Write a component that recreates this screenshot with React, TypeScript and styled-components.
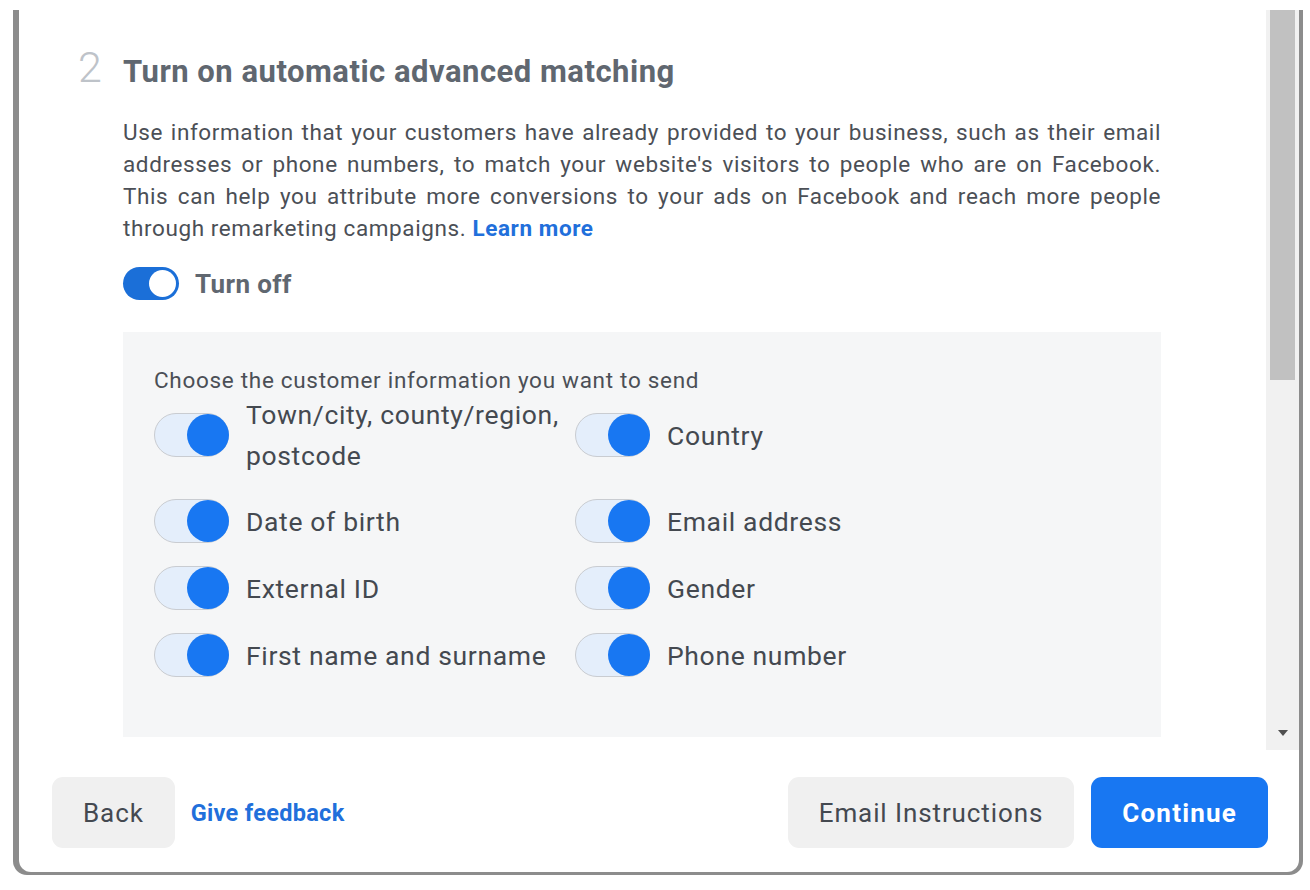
import React from "react";
import styled, { createGlobalStyle } from "styled-components";

const Global = createGlobalStyle`
  html, body { margin: 0; padding: 0; background: #ffffff; }
  body { font-family: Roboto, "Liberation Sans", Arial, sans-serif; -webkit-font-smoothing: antialiased; }
  * { box-sizing: border-box; }
`;

const Frame = styled.div`
  margin: 10px 0 0 13px;
  width: 1290px;
  height: 865px;
  background: #8c8c8c;
  padding: 0 4px 3px 6px;
  border-radius: 0 0 14px 14px;
`;

const Dialog = styled.div`
  height: 100%;
  background: #ffffff;
  border-radius: 0 0 12px 12px;
  display: flex;
  flex-direction: column;
  overflow: hidden;
`;

const Body = styled.div`
  height: 740px;
  display: flex;
  flex-direction: row;
`;

const Content = styled.div`
  flex: 1;
  padding: 36px 0 0 59px;
  overflow: hidden;
`;

const Section = styled.section`
  display: grid;
  grid-template-columns: 45px 1038px;
  align-items: baseline;
`;

const StepNumber = styled.div`
  font-size: 43px;
  font-weight: 300;
  line-height: 42px;
  color: #bec3c9;
`;

const Title = styled.h2`
  margin: 0;
  font-size: 31px;
  font-weight: 700;
  line-height: 42px;
  letter-spacing: 0.5px;
  color: #606770;
`;

const Main = styled.div`
  grid-column: 2;
`;

const Paragraph = styled.p`
  margin: 23px 0 0;
  font-size: 22.5px;
  line-height: 32px;
  color: #4b4f56;
  text-align: justify;
  letter-spacing: 0.6px;
`;

const Link = styled.a`
  color: #216fdb;
  font-weight: 700;
  text-decoration: none;
`;

const ToggleRow = styled.div`
  margin-top: 23px;
  display: flex;
  align-items: center;
  gap: 16px;
`;

const MainTrack = styled.div`
  position: relative;
  width: 56px;
  height: 33px;
  border-radius: 17px;
  background: #1b6fd8;
`;

const MainKnob = styled.div`
  position: absolute;
  right: 3px;
  top: 3px;
  width: 27px;
  height: 27px;
  border-radius: 50%;
  background: #ffffff;
`;

const ToggleLabel = styled.span`
  font-size: 26px;
  font-weight: 700;
  letter-spacing: 0.4px;
  color: #606770;
`;

const OptionsBox = styled.div`
  margin-top: 32px;
  height: 405px;
  background: #f5f6f7;
  padding: 34px 31px 0;
`;

const BoxCaption = styled.div`
  font-size: 22.5px;
  line-height: 28px;
  letter-spacing: 0.7px;
  color: #4b4f56;
`;

const OptionsGrid = styled.div`
  display: grid;
  grid-template-columns: 421px 421px;
  row-gap: 23px;
`;

const Option = styled.div`
  display: flex;
  align-items: center;
  gap: 17px;
`;

const SmallTrack = styled.div`
  position: relative;
  flex: 0 0 auto;
  width: 75px;
  height: 44px;
  border-radius: 22px;
  background: #e4eefb;
  border: 1.5px solid #c9ccd1;
`;

const SmallKnob = styled.div`
  position: absolute;
  right: -1px;
  top: 50%;
  transform: translateY(-50%);
  width: 42px;
  height: 42px;
  border-radius: 50%;
  background: #1877f2;
`;

const OptionLabel = styled.span`
  font-size: 26.5px;
  line-height: 41px;
  letter-spacing: 0.65px;
  color: #444950;
`;

const ScrollTrack = styled.div`
  width: 33px;
  background: #f1f1f1;
  padding: 0 4px;
  display: flex;
  flex-direction: column;
  justify-content: space-between;
  align-items: center;
`;

const ScrollThumb = styled.div`
  width: 25px;
  height: 370px;
  background: #c1c1c1;
`;

const ScrollArrow = styled.div`
  width: 0;
  height: 0;
  border-left: 5px solid transparent;
  border-right: 5px solid transparent;
  border-top: 6px solid #505050;
  margin-bottom: 14px;
`;

const Footer = styled.div`
  display: flex;
  align-items: center;
  padding: 27px 31px 0 33px;
`;

const Button = styled.button<{ $primary?: boolean }>`
  height: 71px;
  padding: 0 31px;
  border: none;
  border-radius: 11px;
  font-family: Roboto, "Liberation Sans", Arial, sans-serif;
  font-size: 26px;
  font-weight: ${(p) => (p.$primary ? 700 : 400)};
  letter-spacing: ${(p) => (p.$primary ? "1.2px" : "0.9px")};
  color: ${(p) => (p.$primary ? "#ffffff" : "#444950")};
  background: ${(p) => (p.$primary ? "#1877f2" : "#f0f0f0")};
`;

const FeedbackLink = styled.a`
  margin-left: 16px;
  font-size: 23.5px;
  font-weight: 700;
  letter-spacing: 0.3px;
  color: #216fdb;
  text-decoration: none;
`;

const Spacer = styled.div`
  flex: 1;
`;

const ButtonGroup = styled.div`
  display: flex;
  gap: 17px;
`;

const options: string[] = [
  "Town/city, county/region, postcode",
  "Country",
  "Date of birth",
  "Email address",
  "External ID",
  "Gender",
  "First name and surname",
  "Phone number",
];

export default function App() {
  return (
    <>
      <Global />
      <Frame>
        <Dialog>
          <Body>
            <Content>
              <Section>
                <StepNumber>2</StepNumber>
                <Title>Turn on automatic advanced matching</Title>
                <Main>
                  <Paragraph>
                    Use information that your customers have already provided to your business, such as their
                    email addresses or phone numbers, to match your website's visitors to people who are on
                    Facebook. This can help you attribute more conversions to your ads on Facebook and reach more
                    people through remarketing campaigns. <Link href="#">Learn more</Link>
                  </Paragraph>
                  <ToggleRow>
                    <MainTrack>
                      <MainKnob />
                    </MainTrack>
                    <ToggleLabel>Turn off</ToggleLabel>
                  </ToggleRow>
                  <OptionsBox>
                    <BoxCaption>Choose the customer information you want to send</BoxCaption>
                    <OptionsGrid>
                      {options.map((o) => (
                        <Option key={o}>
                          <SmallTrack>
                            <SmallKnob />
                          </SmallTrack>
                          <OptionLabel>{o}</OptionLabel>
                        </Option>
                      ))}
                    </OptionsGrid>
                  </OptionsBox>
                </Main>
              </Section>
            </Content>
            <ScrollTrack>
              <ScrollThumb />
              <ScrollArrow />
            </ScrollTrack>
          </Body>
          <Footer>
            <Button>Back</Button>
            <FeedbackLink href="#">Give feedback</FeedbackLink>
            <Spacer />
            <ButtonGroup>
              <Button>Email Instructions</Button>
              <Button $primary>Continue</Button>
            </ButtonGroup>
          </Footer>
        </Dialog>
      </Frame>
    </>
  );
}
